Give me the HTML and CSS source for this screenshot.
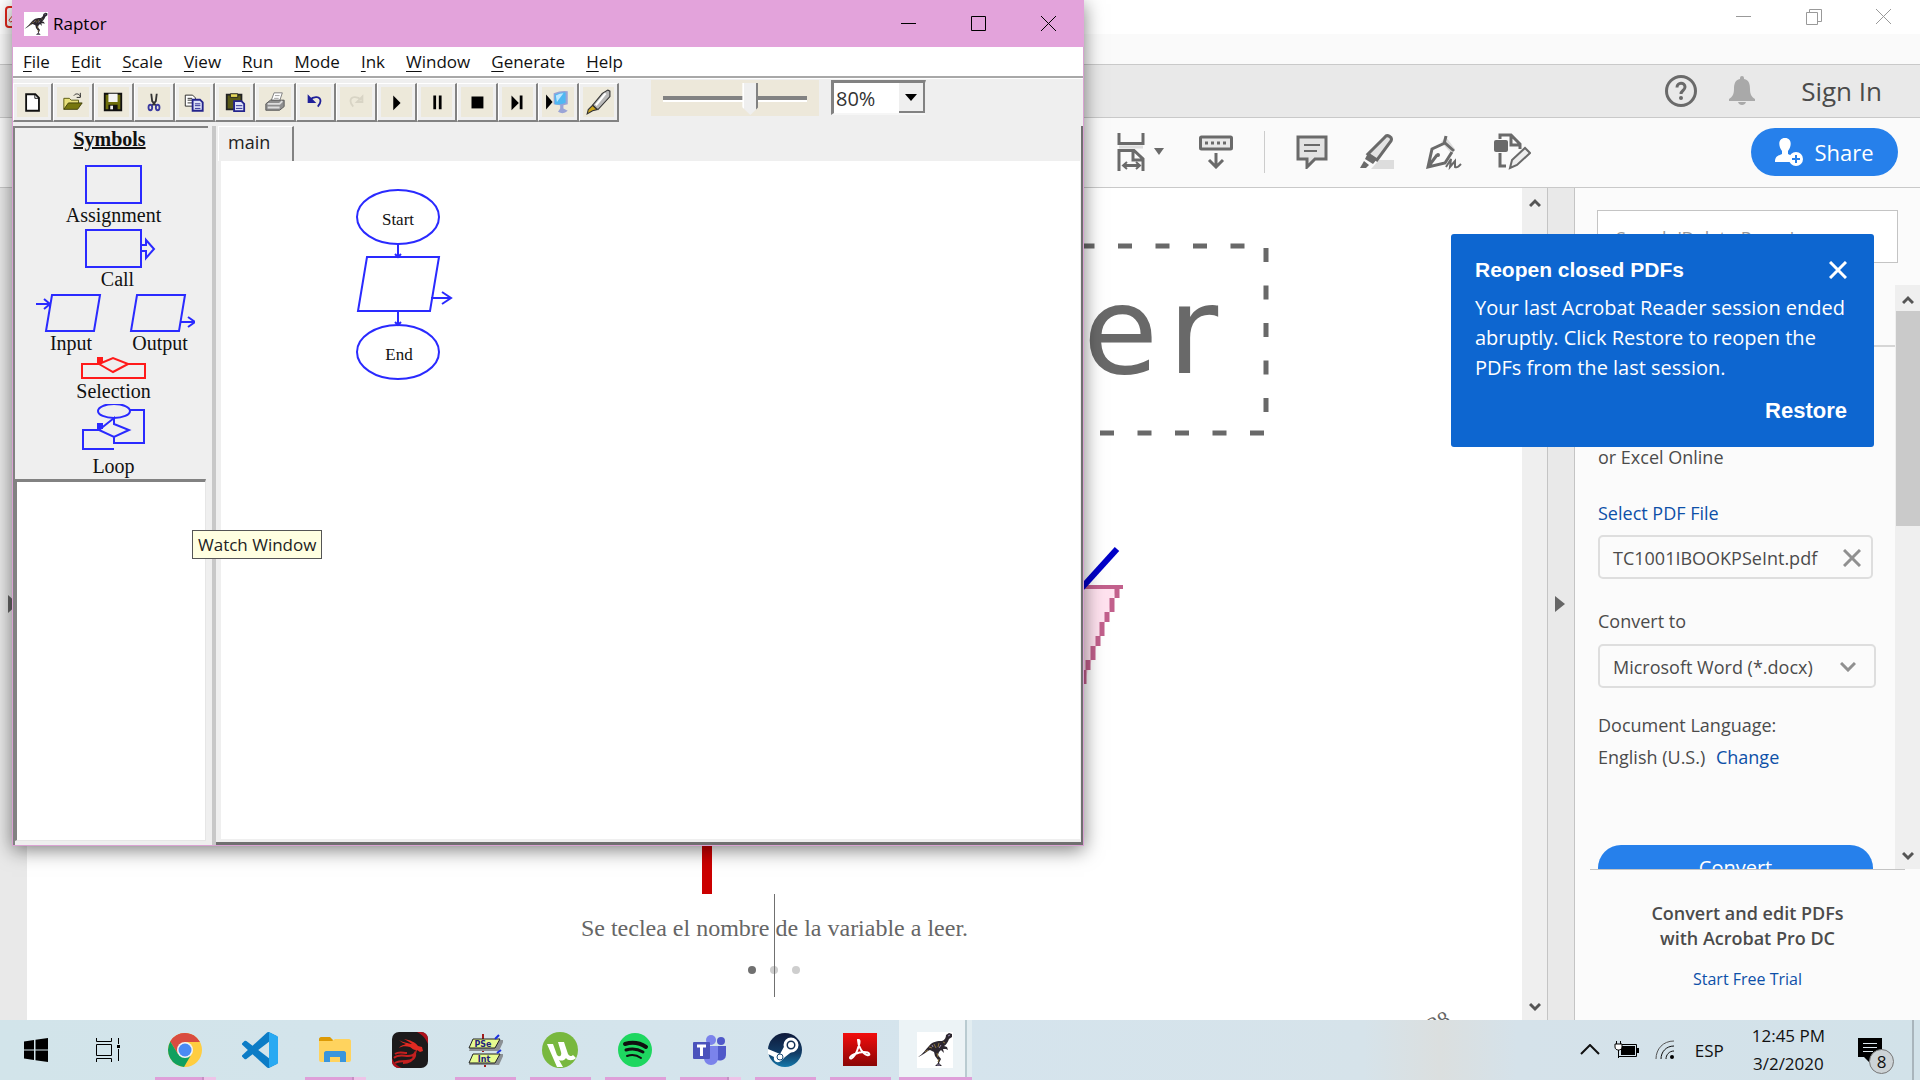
FILE: index.html
```html
<!DOCTYPE html>
<html lang="en">
<head>
<meta charset="utf-8">
<title>Raptor</title>
<link rel="stylesheet" href="styles.css">
</head>
<body>
<svg class="defs" aria-hidden="true">
  <symbol id="dino" viewBox="0 0 36 36">
    <rect width="36" height="36" fill="#fff"/>
    <path d="M1 25C6 22 9 17 12 14C16 9 21 9 25 9C28 8 29 5 29 3L32 1L35 2L35 5L32 7C31 10 29 13 27 14L30 15L31 18L29 17L26 17L27 21L24 18L22 20L21 23L24 27L22 31L25 34L18 34L21 31L21 28L18 24L17 20L13 18C10 19 6 23 1 25Z" fill="#2b262e"/>
    <path d="M12 15l3 1M17 12l2 4M22 11l-1 4M20 21l1 4M8 20l3-2M26 10l2 1M22 27l-1 3" stroke="#8a743c" stroke-width="1"/>
    <path d="M15 13l1 2M24 13l-2 3M20 33l3 0M31 4l2-1" stroke="#9a8cb4" stroke-width="1"/>
  </symbol>
  <symbol id="chev-up" viewBox="0 0 12 10"><path d="M1 8L6 3L11 8" fill="none" stroke="#555" stroke-width="3"/></symbol>
  <symbol id="chev-down" viewBox="0 0 12 10"><path d="M1 2L6 7L11 2" fill="none" stroke="#555" stroke-width="3"/></symbol>
</svg>

<main class="desktop">
  <section class="acrobat" aria-label="Acrobat Reader">
    <header class="ac-title">
      <svg class="ac-logo" width="22" height="22" viewBox="0 0 22 22" fill="none" stroke="#e2261c"><rect x="1" y="1" width="20" height="20" rx="3" stroke-width="2"/><path d="M4 14c3-4 6-6 7-9c1 5 3 7 7 7c-5 0-9 1-12 4c-1 0-2-1-2-2z"/></svg>
      <div class="ac-controls">
        <button aria-label="Minimize"><svg width="16" height="16" viewBox="0 0 16 16" stroke="#999"><path d="M0 7.500h15"/></svg></button>
        <button aria-label="Restore window"><svg width="16" height="16" viewBox="0 0 16 16" stroke="#999" fill="none"><path d="M.5 3.500h11v12h-11zM3.500 3.500v-3h12v12h-4"/></svg></button>
        <button aria-label="Close window"><svg width="16" height="16" viewBox="0 0 16 16" stroke="#999"><path d="M0 0l15 15M15 0L0 15"/></svg></button>
      </div>
    </header>
    <div class="ac-menu"></div>
    <div class="ac-tabs">
      <button aria-label="Help"><svg width="32" height="32" viewBox="0 0 32 32" fill="none" stroke="#6a6a6a"><circle cx="16" cy="16" r="14.500" stroke-width="3"/><path d="M12 12.500c0-5.500 8-5.500 8-.5c0 3.500-4 3.500-4 7" stroke-width="3"/><circle cx="16" cy="23" r="2" fill="#6a6a6a" stroke="none"/></svg></button>
      <button aria-label="Notifications"><svg width="26" height="30" viewBox="0 0 26 30" fill="#a9a9a9"><path d="M11 2a2 2 0 0 1 4 0v1c5 1 6 5 6 10c0 6 2 8 5 10v2H0v-2c3-2 5-4 5-10c0-5 1-9 6-10zM9 26h8c-1 4-7 4-8 0z"/></svg></button>
      <a class="sign-in" href="#signin">Sign In</a>
    </div>
    <div class="ac-tools">
      <div class="tool-icons">
        <button aria-label="Fit page"><svg width="48" height="38" viewBox="0 0 48 38" fill="none" stroke="#6a6a6a" stroke-width="3"><path d="M2 0v10.500h24V0M2 38V17.500h15L26 26v12M16 18v9h10M7 32.500h15" /><path d="M2 14h24" stroke="#ddd"/><path d="M10 29l-4 3.500l4 3.500M19 29l4 3.500l-4 3.500" stroke-width="2"/><path d="M37 15h10l-5 7z" fill="#6a6a6a" stroke="none"/></svg></button>
        <button aria-label="Scrolling" class="gap-l"><svg width="34" height="34" viewBox="0 0 34 34" fill="none" stroke="#6a6a6a" stroke-width="3"><rect x="1.500" y="2" width="31" height="12" rx="1" fill="#e8e8e8"/><path d="M6 8h22" stroke-dasharray="3 3"/><path d="M17 18v14M10 25l7 7l7-7"/></svg></button>
        <span class="tool-sep"></span>
        <button aria-label="Comment"><svg width="32" height="34" viewBox="0 0 32 34" fill="#e3e3e3" stroke="#6a6a6a" stroke-width="3"><path d="M2 2h28v22H19l-8 8v-8H2z"/><path d="M8 10h16M8 16h13" stroke-width="2"/></svg></button>
        <button aria-label="Highlight"><svg width="36" height="36" viewBox="0 0 36 36" stroke="#6a6a6a" stroke-width="3"><path d="M12 35l8-9h15v9z" fill="#ddd" stroke="none"/><path d="M26 3c2-3 8 0 6 4L18 26l-9-6z" fill="#e3e3e3"/><path d="M9 19l9 6l-4 5l-8-5z" fill="#6a6a6a" stroke="none"/><path d="M5 27l5 4l-3 3H1z" fill="#6a6a6a" stroke="none"/></svg></button>
        <button aria-label="Sign"><svg width="36" height="36" viewBox="0 0 36 36" fill="none" stroke="#6a6a6a" stroke-width="3"><path d="M20 3l9 12l-5 3l-9-10z" fill="#ddd" stroke="none"/><path d="M18 10L20 2M28 17l-9-8l-13 6L2 33l17-4l7-11M2 33l9-12"/><circle cx="12" cy="21" r="2" fill="#6a6a6a" stroke="none"/><path d="M20 33l5-8l-1 8l5-6v6c2 1 3 0 6-3" stroke-width="2"/></svg></button>
        <button aria-label="More tools"><svg width="38" height="38" viewBox="0 0 38 38" fill="none" stroke="#6a6a6a" stroke-width="3"><path d="M7 6V2h11l9 9v5M18 3v9h8M7 20v13h6"/><rect x="1" y="7" width="14" height="12" rx="2" fill="#6a6a6a" stroke="none"/><path d="M17 35l2-8l13-12l5 5l-13 12z" fill="#eee" stroke-width="2"/></svg></button>
      </div>
      <button class="share"><svg width="28" height="28" viewBox="0 0 28 28" fill="#fff"><path d="M10 0c7 0 7 8 3 13v3l4 2a8 8 0 0 0-1 6H0c0-5 2-6 7-8v-3C3 8 3 0 10 0z"/><circle cx="21" cy="21" r="7"/><path d="M21 17v8M17 21h8" stroke="#2680eb" stroke-width="2"/></svg>Share</button>
    </div>
    <div class="ac-body">
      <div class="nav-strip"><svg width="10" height="18" viewBox="0 0 10 18"><path d="M0 0l10 9l-10 9z" fill="#666"/></svg></div>
      <article class="doc">
        <svg class="doc-art" viewBox="27 188 1495 706" height="706" role="img" aria-label="Leer diagram">
          <g fill="none" stroke="#696969" stroke-width="5" stroke-dasharray="14 23.500">
            <path d="M1080.500 246H1248"/><path d="M1266 248V414"/><path d="M1062.500 433H1266"/>
          </g>
          <g class="doc-word"><text x="1083" y="373">e</text><text x="1168" y="373">r</text></g>
          <path d="M1070 587h47L1080 694z" fill="#ffe2ef"/>
          <path d="M1070 587h53" stroke="#c2608c" stroke-width="4"/>
          <path d="M1117 588v10M1112 598v14M1107 612v10M1102 622v14M1098 636v10M1093 646v14M1088 660v10M1084 670v14" fill="none" stroke="#c2608c" stroke-width="5"/>
          <path d="M1078 592L1117 549" stroke="#0000c8" stroke-width="6"/>
          <rect x="702" y="800" width="10" height="94" fill="#cb0000"/>
        </svg>
        <p class="doc-caption">Se teclea el nombre de la variable a leer.</p>
        <div class="dots"><i class="dot on"></i><i class="dot"></i><i class="dot"></i></div>
        <span class="doc-caret"></span>
        <span class="page-no">28</span>
      </article>
      <div class="scroll"><svg width="12" height="10"><use href="#chev-up"/></svg><svg width="12" height="10"><use href="#chev-down"/></svg></div>
      <div class="pane-toggle"><svg width="10" height="16" viewBox="0 0 10 16"><path d="M0 0l10 8l-10 8z" fill="#666"/></svg></div>
      <aside class="pane">
        <input class="pane-search" type="text" aria-label="Search tools" placeholder="Search 'Delete Pages'">
        <div class="pane-main">
          <div class="pane-form">
            <hr>
            <p class="pane-intro">or Excel Online</p>
            <a class="pane-link" href="#select">Select PDF File</a>
            <div class="file-box"><span>TC1001IBOOKPSeInt.pdf</span><button aria-label="Remove file"><svg width="18" height="18" viewBox="0 0 18 18" stroke="#909090" stroke-width="3"><path d="M1 1l16 16M17 1L1 17"/></svg></button></div>
            <label class="pane-label" for="fmt">Convert to</label>
            <div class="select-box"><select id="fmt"><option>Microsoft Word (*.docx)</option></select><svg width="16" height="10" viewBox="0 0 16 10"><path d="M1 1l7 7l7-7" fill="none" stroke="#909090" stroke-width="3"/></svg></div>
            <p class="lang">Document Language:<br>English (U.S.) <a href="#lang">Change</a></p>
            <button class="convert">Convert</button>
          </div>
          <div class="scroll pane-scroll"><svg width="12" height="10"><use href="#chev-up"/></svg><span class="thumb"></span><svg width="12" height="10"><use href="#chev-down"/></svg></div>
        </div>
        <footer class="pane-foot"><strong>Convert and edit PDFs<br>with Acrobat Pro DC</strong><a href="#trial">Start Free Trial</a></footer>
      </aside>
    </div>
  </section>

  <section class="toast" role="alert">
    <div class="toast-head"><h2>Reopen closed PDFs</h2><button aria-label="Dismiss"><svg width="18" height="18" viewBox="0 0 18 18" stroke="#fff" stroke-width="3"><path d="M1 1l16 16M17 1L1 17"/></svg></button></div>
    <p>Your last Acrobat Reader session ended abruptly. Click Restore to reopen the PDFs from the last session.</p>
    <button class="restore">Restore</button>
  </section>

  <section class="raptor" aria-label="Raptor">
    <header class="r-title">
      <svg width="24" height="24"><use href="#dino"/></svg>
      <h1>Raptor</h1>
      <div class="r-controls">
        <button aria-label="Minimize"><svg width="16" height="16" viewBox="0 0 16 16" stroke="#000"><path d="M0 7.500h15"/></svg></button>
        <button aria-label="Maximize"><svg width="16" height="16" viewBox="0 0 16 16" stroke="#000" fill="none"><path d="M.5.5h14v14H.5z"/></svg></button>
        <button aria-label="Close"><svg width="16" height="16" viewBox="0 0 16 16" stroke="#000"><path d="M0 0l15 15M15 0L0 15"/></svg></button>
      </div>
    </header>
    <nav class="r-menu">
      <a href="#file"><u>F</u>ile</a><a href="#edit"><u>E</u>dit</a><a href="#scale"><u>S</u>cale</a><a href="#view"><u>V</u>iew</a><a href="#run"><u>R</u>un</a><a href="#mode"><u>M</u>ode</a><a href="#ink"><u>I</u>nk</a><a href="#window"><u>W</u>indow</a><a href="#generate"><u>G</u>enerate</a><a href="#help"><u>H</u>elp</a>
    </nav>
    <div class="r-tools">
      <div class="r-buttons">
        <button aria-label="New"><svg viewBox="0 0 24 24"><path d="M4.500 3.500h10l4 4v14h-14z" fill="#fff" stroke="#111" stroke-width="2"/><path d="M14 4v4h4" fill="none" stroke="#111"/></svg></button>
        <button aria-label="Open"><svg viewBox="0 0 24 24"><path d="M2 20V8h6l2 2h8v3" fill="#e8e07a" stroke="#55550c" stroke-width="1"/><path d="M2 20l5-7h15l-5 7z" fill="#77770e" stroke="#3d3d08"/><path d="M13 5c2-3 6-2 7 1M20 2v5h-4" fill="none" stroke="#222"/></svg></button>
        <button aria-label="Save"><svg viewBox="0 0 24 24"><path d="M3 3h18v18H3z" fill="#6e6e0c" stroke="#111" stroke-width="2"/><path d="M7 3h10v9H7z" fill="#f4f4f4"/><path d="M7 15h10v6H7z" fill="#111"/><path d="M9 16h3v4H9z" fill="#eee"/></svg></button>
        <button aria-label="Cut"><svg viewBox="0 0 24 24" fill="none"><path d="M9 3l1 8l4 5M15 3l-1 8l-4 5" stroke="#333" stroke-width="2"/><ellipse cx="8" cy="18" rx="2" ry="3" stroke="#3a3aa0" stroke-width="2"/><ellipse cx="16" cy="18" rx="2" ry="3" stroke="#3a3aa0" stroke-width="2"/></svg></button>
        <button aria-label="Copy"><svg viewBox="0 0 24 24" stroke-width="1"><path d="M2.500 4.500h8l3 3v9h-11z" fill="#fff" stroke="#222"/><path d="M5 8h5M5 10h6M5 13h5" stroke="#222"/><path d="M10.500 9.500h8l3 3v9h-11z" fill="#dfe3f8" stroke="#24248c" stroke-width="2"/><path d="M13 14h6M13 16h6M13 19h6" stroke="#24248c"/></svg></button>
        <button aria-label="Paste"><svg viewBox="0 0 24 24"><path d="M3 4h16v16H3z" fill="#5a5a16" stroke="#222" stroke-width="2"/><path d="M7 3h8v4H7z" fill="#e5d85a" stroke="#222"/><path d="M11 11h8l3 3v8H11z" fill="#dfe3f8" stroke="#24248c" stroke-width="2"/><path d="M13 16h7M13 19h7" stroke="#24248c"/></svg></button>
        <button aria-label="Print"><svg viewBox="0 0 24 24"><path d="M8 10l3-8h9l-3 9z" fill="#fff" stroke="#777"/><path d="M2 14l5-4h15v7l-5 4H2z" fill="#8f8f8f" stroke="#555"/><path d="M4 14h13l3-3M4 18h13" fill="none" stroke="#ddd" stroke-width="2"/><path d="M12 5h5M11 8h5" stroke="#999"/></svg></button>
        <button aria-label="Undo"><svg viewBox="0 0 24 24" fill="none" stroke="#20209a" stroke-width="2"><path d="M6 10c5-5 12-4 12 1c0 3-1 4-3 6"/><path d="M5 6v6h6z" fill="#20209a"/></svg></button>
        <button aria-label="Redo" disabled><svg viewBox="0 0 24 24" fill="none" stroke="#d8d4c5" stroke-width="2"><path d="M18 10C13 5 6 6 6 11c0 3 1 4 3 6"/><path d="M19 6v6h-6z"/></svg></button>
        <button aria-label="Play"><svg viewBox="0 0 24 24"><path d="M9 5l8 8l-8 8z"/></svg></button>
        <button aria-label="Pause"><svg viewBox="0 0 24 24"><path d="M8 5h3v15H8zM14 5h3v15h-3z"/></svg></button>
        <button aria-label="Stop"><svg viewBox="0 0 24 24"><path d="M6 6h13v13H6z"/></svg></button>
        <button aria-label="Step"><svg viewBox="0 0 24 24"><path d="M6 5l8 8l-8 8zM15 5h3v15h-3z"/></svg></button>
        <button aria-label="Run compiled"><svg class="big" viewBox="0 0 24 24"><path d="M1 5l6 7l-6 7z"/><path d="M8 4q7-3 13-2v12l-4 1v3l4 2q-4 4-9 1l2-3v-3l-6-1z" fill="#9aa4d6"/><path d="M9 5q6-2 10-2v10q-5 2-10 1z" fill="#4fb8f2"/><path d="M10 6q4-2 7-2l-6 8z" fill="#bfe8ff"/></svg></button>
        <button aria-label="Ink pen"><svg class="big" viewBox="0 0 24 24"><path d="M21 1l2 1v5L12 19l-5-4L16 4z" fill="#b9b9b9" stroke="#333" stroke-width="1"/><path d="M19 4l-9 11" stroke="#fff" stroke-width="2"/><path d="M7 15l4 4l-4 1l-5 3l1-4z" fill="#cfa81c" stroke="#333"/></svg></button>
      </div>
      <div class="speed"><input type="range" min="0" max="100" value="62" aria-label="Speed"></div>
      <div class="zoom-box"><select aria-label="Zoom"><option>80%</option></select><span class="zoom-arrow"><svg width="12" height="7" viewBox="0 0 12 7"><path d="M0 0h12L6 7z"/></svg></span></div>
    </div>
    <div class="r-main">
      <div class="left-col">
        <div class="symbols">
          <h2>Symbols</h2>
          <figure><svg width="62" height="40" viewBox="83 164 62 40"><path d="M86 166h55v37H86z"/></svg><figcaption>Assignment</figcaption></figure>
          <figure><svg width="90" height="40" viewBox="69 228 90 40"><path d="M86 230h55v37H86zM141 245h5v-5l8 9l-8 9v-7h-5"/></svg><figcaption class="nudge">Call</figcaption></figure>
          <div class="pair">
            <figure><svg width="70" height="40" viewBox="36 292 70 40"><path d="M52 295h48l-6 36H46zM36 304h14M44 299l6 5l-6 5"/></svg><figcaption>Input</figcaption></figure>
            <figure><svg width="70" height="40" viewBox="125 292 70 40"><path d="M137 295h48l-6 36h-48zM181 322h14M188 317l7 5l-7 5"/></svg><figcaption>Output</figcaption></figure>
          </div>
          <figure><svg class="red" width="70" height="24" viewBox="79 356 70 24"><path d="M99 364H82v14h63v-14h-17l-15-6zl14 8l15-8"/><path d="M98 358h4v4h-4z" class="solid-red"/></svg><figcaption>Selection</figcaption></figure>
          <figure class="loop"><svg width="70" height="50" viewBox="79 403 70 50"><ellipse cx="114" cy="410" rx="16" ry="7"/><path d="M130 409h14v33h-30v-6M114 417v6l15 6l-15 7l-15-7zM99 429H83v19h31"/><path d="M98 423h4v4h-4z" class="solid"/></svg><figcaption>Loop</figcaption></figure>
        </div>
        <div class="watch"></div>
      </div>
      <div class="splitter"></div>
      <div class="editor">
        <div class="tabs"><button class="tab">main</button></div>
        <div class="canvas">
          <svg width="120" height="200" viewBox="350 184 120 200">
            <ellipse cx="398" cy="217" rx="41" ry="27"/><path d="M398 244v13M395 254l3 3l3-3"/>
            <path d="M367 257h72l-9 54h-72zM431 298h20M442 292l9 6l-9 6"/>
            <path d="M398 311v14M395 322l3 3l3-3"/><ellipse cx="398" cy="352" rx="41" ry="27"/>
            <text x="398" y="225">Start</text><text x="399" y="360">End</text>
          </svg>
        </div>
      </div>
    </div>
    <div class="tooltip" role="tooltip">Watch Window</div>
  </section>
</main>

<footer class="taskbar">
  <button class="sys" aria-label="Start"><svg width="24" height="24" viewBox="0 0 24 24"><path d="M0 3.500L10 2v9.500H0zM11.500 1.800L24 0v11.500H11.500zM0 12.500h10V22L0 20.500zM11.500 12.500H24V24l-12.500-1.800z"/></svg></button>
  <button class="sys" aria-label="Task view"><svg width="26" height="24" viewBox="0 0 26 24" fill="none" stroke="#000" stroke-width="1"><path d="M1.500 0v3.500h15V0M1.500 6.500h15v11h-15zM1.500 24v-3.500h15V24M23.500 0v6M23.500 11v12"/><path d="M22 7h3v3h-3z" fill="#000" stroke="none"/></svg></button>
  <div class="apps">
    <button class="app run multi" aria-label="Chrome"><svg viewBox="0 0 36 36"><circle cx="18" cy="18" r="17" fill="#ffcd40"/><path d="M18 18L3.300 9.500A17 17 0 0 1 32.700 10H18z" fill="#db4437"/><path d="M18 1A17 17 0 0 0 3.300 9.500L11 22l7-12h14.700A17 17 0 0 0 18 1z" fill="#d94c40"/><path d="M3.300 9.500A17 17 0 0 0 17 35l7-12l-13-1z" fill="#10a05f"/><circle cx="18" cy="18" r="8" fill="#f4f4f4"/><circle cx="18" cy="18" r="6.500" fill="#4a8af4"/></svg></button>
    <button class="app" aria-label="Visual Studio Code"><svg viewBox="0 0 24 24"><path d="M23.150 2.587L18.210.21a1.494 1.494 0 0 0-1.705.29l-9.460 8.630-4.120-3.128a.999.999 0 0 0-1.276.057L.327 7.261A1 1 0 0 0 .326 8.740L3.899 12 .326 15.260a1 1 0 0 0 .001 1.479L1.650 17.940a.999.999 0 0 0 1.276.057l4.120-3.128 9.460 8.630a1.492 1.492 0 0 0 1.704.29l4.942-2.377A1.500 1.500 0 0 0 24 20.060V3.939a1.500 1.500 0 0 0-.85-1.352zm-5.146 14.861L10.826 12l7.178-5.448v10.896z" fill="#0c7cc6"/><path d="M18 .2l5.200 2.400c.5.300.8.800.8 1.400v16c0 .6-.3 1.100-.8 1.400L18 23.800z" fill="#29a9f2"/></svg></button>
    <button class="app run multi" aria-label="File Explorer"><svg viewBox="0 0 36 36"><path d="M2 7c0-1 1-2 2-2h9l3 3v4H2z" fill="#dd9a05"/><path d="M2 9h13l3-2h14c1 0 2 1 2 2v19c0 1-1 2-2 2H4c-1 0-2-1-2-2z" fill="#ffd35e"/><path d="M7 30V21c0-1 1-2 2-2h18c1 0 2 1 2 2v9h-6v-5H13v5z" fill="#3a96dd"/></svg></button>
    <button class="app" aria-label="Dragon Center"><svg viewBox="0 0 36 36"><rect width="36" height="36" rx="7" fill="#1c1a1b"/><path d="M25 0h4a7 7 0 0 1 7 7v5c-2-5-5-9-11-12zM0 26c2 5 5 8 10 10H7a7 7 0 0 1-7-7z" fill="#b1101b"/><path d="M7 8c5 3 9 3 13 4c-2-2-5-3-8-5c6 1 11 3 14 7l4 1l1 4l-3 1l-3-2c-1 2 0 3-2 5l1-5c-3 0-4-2-6-3c-4-1-8-1-11 1c2-3 5-3 7-4c-3-1-5-2-7-4z" fill="#e02a22"/><path d="M2 26c4-4 10-2 14-2s6-1 7-3c1 5-3 8-9 8s-8 0-11 2M3 22c4-3 8-1 12-1M22 22c0 7-6 9-11 9" fill="none" stroke="#c4201f" stroke-width="2"/></svg></button>
    <button class="app run" aria-label="PSeInt"><svg viewBox="0 0 36 36"><path d="M16 2v6M16 13v7M18 30v5" stroke="#a01c1c" stroke-width="2"/><path d="M6 8h31l-5 11H2zM6 22h31l-5 11H2z" fill="#8b9094"/><path d="M6 7h27l-5 9H2zM6 22h27l-5 9H2z" fill="#e6fb90" stroke="#222" stroke-width="1"/><text x="16" y="15" class="ps-text">PSe</text><text x="17" y="30" class="ps-text">Int</text><path d="M28 7l4-4M30 21l4-3" stroke="#1a2fe0" stroke-width="2"/></svg></button>
    <button class="app run" aria-label="uTorrent"><svg viewBox="0 0 36 36"><circle cx="18" cy="18" r="18" fill="#78b83e"/><path d="M5 12h6l4 11c3 3 5 0 4-3l-3-10h6l4 12c2 3 4 2 5 1l3 3c-3 3-8 3-10 0c-2 3-5 3-7 2l4 7h-6z" fill="#fff"/></svg></button>
    <button class="app run" aria-label="Spotify"><svg viewBox="0 0 36 36" fill="none" stroke="#101010" stroke-linecap="round"><circle cx="18" cy="18" r="17" fill="#1ed760" stroke="none"/><path d="M8 12c7-2 15-1 21 3" stroke-width="4"/><path d="M9 18c6-2 12-1 17 2" stroke-width="3"/><path d="M10 24c5-2 10-1 14 2" stroke-width="2"/></svg></button>
    <button class="app run multi" aria-label="Teams"><svg viewBox="0 0 36 36"><circle cx="19" cy="8" r="5" fill="#7b83eb"/><circle cx="29" cy="9" r="4" fill="#5059c9"/><path d="M24 14h10v8c0 7-6 7-10 6z" fill="#5059c9"/><path d="M12 14h14v12c0 4-3 7-7 7s-7-3-7-7z" fill="#7b83eb"/><rect x="1" y="10" width="17" height="17" rx="1" fill="#4b53bc"/><path d="M5 14h9M9.500 14v10" stroke="#fff" stroke-width="3"/></svg></button>
    <button class="app run" aria-label="Steam"><svg viewBox="0 0 36 36"><linearGradient id="steam" x2="0" y2="1"><stop stop-color="#0f1a3b"/><stop offset=".6" stop-color="#123d66"/><stop offset="1" stop-color="#1478ab"/></linearGradient><circle cx="18" cy="18" r="17" fill="url(#steam)"/><path d="M1 17l12 5l5-9l9 5l-9 7l-4 4c-4 3-8 0-7-4L1 22z" fill="#fff"/><circle cx="24" cy="13" r="6" fill="#123054" stroke="#fff" stroke-width="3"/><circle cx="24" cy="13" r="3" fill="#fff"/><circle cx="13" cy="25" r="3" fill="none" stroke="#1b4a75"/></svg></button>
    <button class="app run" aria-label="Acrobat Reader"><svg viewBox="0 0 36 36"><linearGradient id="acro" x2="0" y2="1"><stop stop-color="#f20d0d"/><stop offset="1" stop-color="#8a0606"/></linearGradient><rect x="1" y="1" width="34" height="33" fill="url(#acro)"/><path d="M16 8c3-1 1 6-1 11s-6 9-7 7s8-6 14-6s7 4 3 3s-9-8-9-15z" fill="none" stroke="#fff" stroke-width="2"/></svg></button>
    <button class="app run active" aria-label="Raptor"><svg><use href="#dino"/></svg></button>
  </div>
  <div class="tray">
    <button aria-label="Show hidden icons"><svg width="20" height="12" viewBox="0 0 20 12" fill="none" stroke="#111" stroke-width="2"><path d="M1 10l9-9l9 9"/></svg></button>
    <svg class="battery" width="26" height="20" viewBox="0 0 26 20"><path d="M6 4.500h16.500v12H4.500v-4" fill="none" stroke="#000"/><path d="M7 6h14v9H7zM23 8h2v5h-2z"/><path d="M1 4h7v3c0 4-7 4-7 0zM2.500 1v3M6.500 1v3M4.500 10v8" fill="#fff" stroke="#000"/></svg>
    <svg class="wifi" width="20" height="20" viewBox="0 0 20 20" fill="none" stroke="#111"><path d="M1 19C1 9 8 1 19 1" stroke="#555"/><path d="M6 19c0-7 5-13 13-13M11 19c0-4 3-8 8-8"/><circle cx="17" cy="17" r="2" fill="#000" stroke="none"/></svg>
    <span class="lang-code">ESP</span>
    <time class="clock">12:45 PM<br>3/2/2020</time>
    <button class="notif" aria-label="Notifications, 8 new"><svg width="24" height="24" viewBox="0 0 24 24"><path d="M0 0h24v19H15l-4 5l-5-5H0z"/><path d="M5 5.500h14M5 9.500h14M5 13.500h10" stroke="#dde8ee"/></svg><span class="badge">8</span></button>
  </div>
</footer>
</body>
</html>
```
FILE: styles.css
```css
* { box-sizing: border-box; }
html, body { height: 100%; margin: 0; }
body {
  display: flex;
  flex-direction: column;
  overflow: hidden;
  font-family: "Open Sans", "Noto Sans", sans-serif;
  font-size: 18px;
  color: #4b4b4b;
}
h1, h2, p, figure { margin: 0; }
svg { display: block; flex: none; }
a { color: inherit; text-decoration: none; }
button { padding: 0; border: 0; background: none; color: inherit; font: inherit; }
input, select { font: inherit; color: inherit; margin: 0; }
.defs { position: absolute; width: 0; height: 0; }

.desktop { position: relative; flex: 1; min-height: 0; display: flex; }

/* Acrobat window */
.acrobat { flex: 1; display: flex; flex-direction: column; min-width: 0; background: #fafafa; }
.ac-title { height: 34px; display: flex; justify-content: space-between; align-items: center; padding: 0 28px 0 5px; background: #fff; }
.ac-controls { display: flex; gap: 54px; }
.ac-menu { height: 31px; border-bottom: 1px solid #c9c9c9; }
.ac-tabs { height: 53px; display: flex; align-items: center; justify-content: flex-end; padding-right: 38px; background: #e9e9e9; border-bottom: 1px solid #c9c9c9; }
.ac-tabs button { margin-right: 32px; }
.sign-in { font-size: 26px; margin-left: 14px; }
.ac-tools { height: 70px; display: flex; align-items: center; justify-content: space-between; padding: 0 22px 2px 1117px; border-bottom: 1px solid #c9c9c9; }
.tool-icons { display: flex; align-items: center; gap: 31px; }
.tool-icons .gap-l { margin-left: 3px; }
.tool-sep { width: 1px; height: 42px; background: #ccc; }
.share { display: flex; align-items: center; justify-content: center; gap: 11px; width: 147px; height: 48px; border-radius: 24px; background: #2680eb; color: #fff; font-size: 22px; }
.ac-body { flex: 1; min-height: 0; display: flex; }
.nav-strip { width: 27px; background: #e9e9e9; display: flex; align-items: center; padding-left: 8px; }

.doc { position: relative; flex: 1; min-width: 0; background: #fff; overflow: hidden; }
.doc-art { width: 100%; }
.doc-word { font: 122px "DejaVu Sans", sans-serif; fill: #696969; }
.doc-caption { font: 24px/30px "Liberation Serif", serif; color: #666; text-align: center; margin-top: 19px; }
.dots { display: flex; justify-content: center; gap: 14px; margin-top: 23px; padding-right: 2px; }
.dot { width: 8px; height: 8px; border-radius: 50%; background: #cecece; }
.dot.on { background: #707070; }
.doc-caret { position: absolute; left: 50%; top: 706px; width: 1px; height: 103px; margin-left: -1px; background: #707070; }
.page-no { position: absolute; right: 72px; bottom: -14px; font: 22px/24px "Liberation Serif", serif; color: #666; transform: rotate(-28deg); }

.scroll { width: 25px; background: #efefef; display: flex; flex-direction: column; justify-content: space-between; align-items: center; padding: 10px 0 8px; }
.pane-toggle { width: 28px; border: 1px solid #c4c4c4; border-width: 0 1px; background: #e9e9e9; display: flex; align-items: center; padding-left: 7px; }
.pane { width: 345px; background: #fbfbfb; display: flex; flex-direction: column; }
.pane-search { align-self: flex-start; width: 301px; height: 53px; margin: 22px 0 22px 22px; padding: 2px 18px 0; border: 1px solid #c4c4c4; background: #fff; }
.pane-search::placeholder { color: #999; }
.pane-main { flex: 1; min-height: 0; display: flex; }
.pane-form { flex: 1; overflow: hidden; padding: 0 22px 0 23px; }
.pane-form hr { margin: 60px -22px 0 0; border: 0; border-top: 2px solid #d6d6d6; }
.pane-intro { line-height: 24px; margin-top: 98px; }
.pane-link { display: block; line-height: 24px; margin-top: 32px; }
.pane a { color: #0d50a8; }
.file-box, .select-box { display: flex; align-items: center; justify-content: space-between; height: 44px; border: 2px solid #dedede; border-radius: 5px; margin-top: 10px; padding: 1px 10px 0 13px; }
.pane-label { display: block; line-height: 24px; margin-top: 30px; }
.select-box { margin-top: 11px; margin-right: -3px; padding-right: 18px; }
.select-box select { flex: 1; appearance: none; border: 0; background: none; padding: 0; }
.lang { line-height: 32px; margin-top: 21px; white-space: nowrap; }
.lang a { margin-left: 6px; }
.convert { width: 100%; height: 46px; margin-top: 72px; border-radius: 23px; background: #2680eb; color: #fff; font-size: 20px; line-height: 24px; }
.pane-scroll { justify-content: flex-start; padding-bottom: 8px; }
.pane-scroll .thumb { width: 24px; height: 215px; margin: 6px 0 auto; background: #cacaca; }
.pane-foot { height: 151px; margin: 0 15px; border-top: 1px solid #c4c4c4; display: flex; flex-direction: column; align-items: center; text-align: center; padding-top: 31px; gap: 16px; font-size: 16px; line-height: 25px; }
.pane-foot strong { font-weight: 600; font-size: 18px; }

.toast { position: absolute; top: 234px; right: 46px; width: 423px; height: 213px; padding: 23px 27px 22px 24px; border-radius: 3px; background: #0d66d0; color: #fff; display: flex; flex-direction: column; font-size: 20px; line-height: 30px; }
.toast-head { display: flex; justify-content: space-between; align-items: center; height: 26px; margin-bottom: 10px; }
.toast p { margin-right: -8px; }
.toast h2 { font: bold 21px/26px "Liberation Sans", sans-serif; }
.restore { align-self: flex-end; margin-top: auto; font: bold 22px/28px "Liberation Sans", sans-serif; }

/* Raptor window */
.raptor { position: absolute; inset: 0 836px 174px 12px; display: flex; flex-direction: column; background: #efefef; border: 1px solid #d9a2d2; border-top: 0; box-shadow: 0 4px 18px rgba(0, 0, 0, .5); color: #111; }
.r-title { height: 47px; margin: 0 -1px; display: flex; align-items: center; gap: 5px; padding: 0 27px 0 12px; background: #e3a3db; color: #000; }
.r-title h1 { font-weight: 400; font-size: 17px; }
.r-controls { display: flex; gap: 54px; margin-left: auto; }
.r-menu { height: 31px; display: flex; gap: 21px; padding: 3px 0 0 10px; background: #fff; border-bottom: 2px solid #a8a8a8; font-size: 17px; line-height: 24px; }
.r-menu u { text-underline-offset: 3px; }
.r-tools { height: 48px; display: flex; align-items: flex-start; border-top: 1px solid #fff; }
.r-buttons { display: grid; grid-template-columns: repeat(15, 1fr); width: 606px; height: 39px; margin-top: 4px; }
.r-buttons button { display: grid; place-items: center; border: 1px solid #fff; border-right: 2px solid #828282; border-bottom: 2px solid #828282; background: #ede9da; box-shadow: inset 0 0 0 3px #efefef; }
.r-buttons svg { width: 22px; height: 22px; }
.r-buttons .big { width: 26px; height: 28px; }
.speed { width: 168px; height: 36px; margin: 1px 12px 0 32px; padding: 0 12px; background: #ede8da; display: flex; align-items: center; }
.speed input { appearance: none; width: 144px; height: 36px; background: none; }
.speed input::-webkit-slider-runnable-track { height: 4px; background: #828282; box-shadow: 0 2px #fff; }
.speed input::-webkit-slider-thumb { appearance: none; width: 16px; height: 32px; margin-top: -13px; background: linear-gradient(90deg, #fff 2px, #efefef 2px, #efefef 14px, #828282 14px); clip-path: polygon(0 0, 100% 0, 100% 76%, 50% 100%, 0 76%); }
.zoom-box { display: flex; width: 95px; height: 35px; margin-top: 1px; border: 3px solid #828282; border-right: 1px solid #eee; border-bottom: 2px solid #f6f6f6; background: #fff; }
.zoom-box select { appearance: none; flex: 1; min-width: 0; border: 0; padding: 0 0 0 2px; background: none; font-size: 20px; color: #333; }
.zoom-arrow { display: grid; place-items: center; width: 26px; background: #efefef; border-right: 2px solid #828282; border-bottom: 2px solid #828282; }
.r-main { flex: 1; min-height: 0; display: grid; grid-template-columns: 199px 4px 1fr; }
.left-col { display: flex; flex-direction: column; border-left: 2px solid #828282; border-top: 2px solid #828282; margin-right: 4px; padding-right: 2px; }
.symbols { height: 351px; display: flex; flex-direction: column; align-items: center; padding-left: 6px; font: 20px/20px "Liberation Serif", serif; color: #111; }
.symbols h2 { font: bold 20px/22px "Liberation Serif", serif; text-decoration: underline; margin-bottom: 14px; margin-right: 8px; }
.symbols figure { display: flex; flex-direction: column; align-items: center; }
.symbols figcaption { margin: 1px 0 3px; }
.symbols .nudge { padding-left: 8px; }
.symbols svg, .canvas svg { fill: none; stroke: #2a2aff; stroke-width: 2; }
.symbols .red { stroke: #ff1a1a; }
.solid { fill: #2a2aff; }
.solid-red { fill: #ff1a1a; }
.pair { display: flex; gap: 19px; padding-left: 4px; }
.loop figcaption { margin-top: 2px; }
.watch { flex: 1; background: #fff; border: 1px solid #e6e6e6; border-top: 3px solid #828282; border-left: 2px solid #828282; margin-bottom: 4px; }
.splitter { background: #c8c8c8; }
.editor { display: flex; flex-direction: column; min-width: 0; border-right: 2px solid #707070; border-bottom: 3px solid #707070; }
.tabs { height: 35px; display: flex; padding-left: 2px; }
.tab { width: 76px; text-align: left; padding: 0 0 4px 9px; border-right: 2px solid #828282; border-top: 1px solid #fff; border-left: 1px solid #fff; font-size: 18px; color: #222; }
.canvas { flex: 1; background: #fff; margin: 0 1px 3px 5px; padding: 23px 0 0 129px; }
.canvas svg text { font: 17px "Liberation Serif", serif; text-anchor: middle; fill: #111; stroke: none; }
.tooltip { position: absolute; left: 179px; top: 530px; height: 29px; padding: 0 5px; border: 1px solid #555; background: #ffffe1; font-size: 17px; line-height: 28px; color: #222; white-space: nowrap; }

/* Taskbar */
.taskbar { height: 60px; flex: none; display: flex; background: linear-gradient(90deg, #d2e4ea, #d5e4ed 50%, #d6e3ea 71%, #dbdfdf 75%, #d5e2ea 79%, #d2e2e9); color: #111; }
.sys { width: 72px; display: grid; place-items: center; }
.apps { display: flex; margin-left: 3px; }
.app { position: relative; width: 75px; display: grid; place-items: center; }
.app svg { width: 36px; height: 36px; }
.run::after { content: ""; position: absolute; left: 8px; bottom: 0; width: 61px; height: 3px; background: #df9fd9; }
.multi::after { background: linear-gradient(90deg, #df9fd9 47px, #c78fc3 47px, #c78fc3 49px, #eec3e8 49px); }
.active { background: linear-gradient(90deg, transparent 2px, #ecf3f6 2px, #ecf3f6 68px, #b9cbd1 68px, #b9cbd1 70px, #e2edf1 70px); }
.active::after { left: 2px; width: 73px; }
.ps-text { font: bold 8px "DejaVu Sans", sans-serif; text-anchor: middle; fill: #23237c; }
.tray { flex: 1; display: flex; align-items: center; justify-content: flex-end; margin-right: 6px; padding-right: 30px; border-right: 2px solid #a9b5bc; font-size: 17px; }
.battery { margin-left: 14px; }
.wifi { margin-left: 15px; }
.lang-code { margin-left: 20px; }
.clock { margin: 0 33px 0 28px; text-align: center; line-height: 28px; }
.notif { position: relative; }
.badge { position: absolute; left: 11px; top: 11px; width: 25px; height: 25px; border: 1px solid #777; border-radius: 50%; background: #cdd3d6; font-size: 17px; line-height: 23px; text-align: center; }
```
